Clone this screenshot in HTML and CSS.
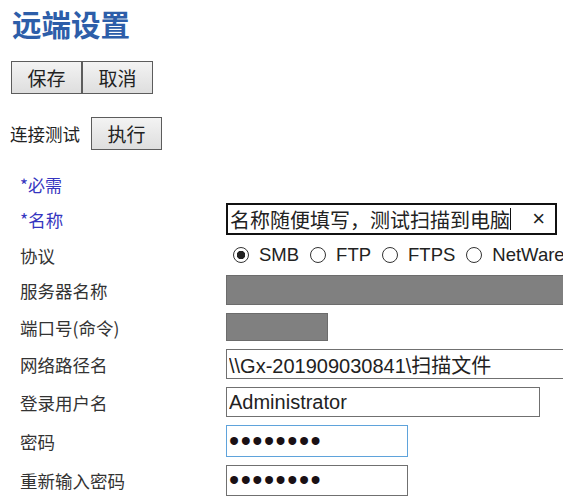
FILE: index.html
```html
<!DOCTYPE html>
<html lang="zh-CN">
<head>
  <meta charset="UTF-8">
  <meta name="viewport" content="width=device-width, initial-scale=1.0">
  <title>远端设置</title>
  <link rel="stylesheet" href="styles.css">
</head>
<body>
  <h1 class="title">远端设置</h1>

  <div class="button-group">
    <button class="btn">保存</button><button class="btn">取消</button>
  </div>

  <div class="test-row">
    <span class="test-label">连接测试</span>
    <button class="btn">执行</button>
  </div>

  <div class="form">
    <div class="required">*必需</div>

    <label class="field-label required-label" for="name">*名称</label>
    <div class="name-box">
      <span class="name-text">名称随便填写，测试扫描到电脑</span><span class="caret"></span>
      <span class="clear">×</span>
    </div>

    <span class="field-label">协议</span>
    <div class="radios">
      <label class="radio"><input type="radio" name="proto" checked> SMB</label>
      <label class="radio"><input type="radio" name="proto"> FTP</label>
      <label class="radio"><input type="radio" name="proto"> FTPS</label>
      <label class="radio"><input type="radio" name="proto"> NetWare</label>
    </div>

    <span class="field-label">服务器名称</span>
    <div class="masked masked-wide"></div>

    <span class="field-label">端口号(命令)</span>
    <div class="masked masked-short"></div>

    <span class="field-label">网络路径名</span>
    <input class="text-input path-input" type="text" value="\\Gx-201909030841\扫描文件">

    <span class="field-label">登录用户名</span>
    <input class="text-input user-input" type="text" value="Administrator">

    <span class="field-label">密码</span>
    <input class="text-input pass-input focused" type="password" value="12345678">

    <span class="field-label">重新输入密码</span>
    <input class="text-input pass-input" type="password" value="12345678">
  </div>
</body>
</html>
```

FILE: styles.css
```css
body { margin: 0; padding: 0 0 0 11px; font-family: "Liberation Sans", "Noto Sans CJK SC", sans-serif; color: #222; background: #fff; overflow: hidden; }

.title { margin: 5px 0 0 1px; font-size: 29.5px; line-height: 36px; font-weight: bold; color: #2d5ea9; font-family: "Noto Sans CJK SC", sans-serif; }

.btn { width: 71px; height: 33px; padding: 0; font-family: "Noto Sans CJK SC", sans-serif; font-size: 19px; color: #222; background: linear-gradient(#f3f3f3, #dedede); border: 1px solid #5c5c5c; border-radius: 0; }

.button-group { display: flex; margin-top: 20px; }

.test-row { display: flex; align-items: center; gap: 11px; margin-top: 23px; }
.test-label { font-family: "Noto Sans CJK SC", sans-serif; font-size: 17.5px; margin-left: -1px; }

.form {
  display: grid;
  grid-template-columns: 206px 360px;
  grid-template-rows: 22px 32px 24px 30px 28px 30px 30px 32px 31px;
  row-gap: 8px;
  align-items: center;
  margin-top: 23px;
  padding-left: 9px;
}

.required { grid-column: 1 / 3; font-family: "Noto Sans CJK SC", sans-serif; font-size: 17px; color: #3535c0; }
.field-label { font-family: "Noto Sans CJK SC", sans-serif; font-size: 17.5px; color: #333; }
.required-label { color: #3535c0; }

.name-box { display: flex; align-items: center; width: 331px; height: 32px; box-sizing: border-box; border: 2px solid #111; padding: 0 0 0 2px; font-family: "Noto Sans CJK SC", sans-serif; font-size: 20px; }
.name-text { white-space: nowrap; color: #222; }
.caret { width: 1px; height: 22px; background: #111; }
.clear { margin-left: auto; margin-right: 10px; font-size: 22px; color: #222; font-family: "Liberation Sans", sans-serif; }

.radios { display: flex; align-items: center; gap: 11px; font-size: 18.5px; color: #222; white-space: nowrap; }
.radio { display: flex; align-items: center; gap: 10px; }
.radio input { appearance: none; -webkit-appearance: none; margin: 0 0 0 7px; width: 16px; height: 16px; border: 1px solid #333; border-radius: 50%; background: #fff; }
.radio + .radio input { margin-left: 0; }
.radio input:checked { background: radial-gradient(circle, #222 0 4px, #fff 4.5px); }

.masked { height: 100%; background: #808080; border: 1px solid #6c6c6c; box-sizing: border-box; }
.masked-wide { width: 345px; }
.masked-short { width: 102px; }

.text-input { height: 100%; box-sizing: border-box; margin: 0; padding: 0 2px; border: 1.5px solid #707070; font-family: "Liberation Sans", "Noto Sans CJK SC", sans-serif; font-size: 20px; color: #222; outline: none; }
.path-input { width: 345px; }
.user-input { width: 314px; }
.pass-input { width: 182px; font-size: 29px; letter-spacing: 1.5px; color: #1a1014; }
.focused { border-color: #5fa3db; }
```
